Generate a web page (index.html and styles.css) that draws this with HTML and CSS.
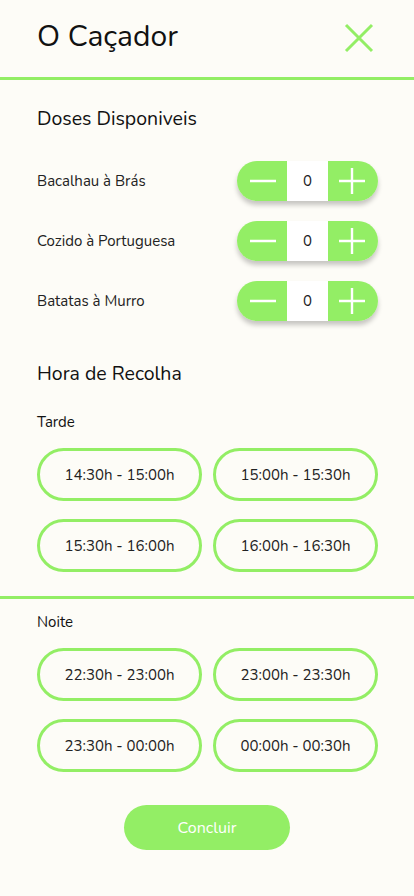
FILE: index.html
```html
<!DOCTYPE html>
<html lang="pt">
<head>
<meta charset="utf-8">
<link rel="stylesheet" href="styles.css">
</head>
<body>
<header class="header">
  <h1 class="title">O Caçador</h1>
  <svg class="close" width="30" height="30" viewBox="0 0 30 30"><path d="M2 2 L28 28 M28 2 L2 28" stroke="#93ee65" stroke-width="3" fill="none"/></svg>
</header>
<div class="rule"></div>
<section class="doses">
  <h2 class="heading">Doses Disponiveis</h2>
  <div class="dose-row">
    <span class="dose-name">Bacalhau à Brás</span>
    <div class="stepper">
      <button class="step step-minus"><svg width="28" height="28" viewBox="0 0 28 28"><path d="M1 14 H27" stroke="#fff" stroke-width="2.4"/></svg></button>
      <span class="count">0</span>
      <button class="step step-plus"><svg width="28" height="28" viewBox="0 0 28 28"><path d="M1 14 H27 M14 1 V27" stroke="#fff" stroke-width="2.4"/></svg></button>
    </div>
  </div>
  <div class="dose-row">
    <span class="dose-name">Cozido à Portuguesa</span>
    <div class="stepper">
      <button class="step step-minus"><svg width="28" height="28" viewBox="0 0 28 28"><path d="M1 14 H27" stroke="#fff" stroke-width="2.4"/></svg></button>
      <span class="count">0</span>
      <button class="step step-plus"><svg width="28" height="28" viewBox="0 0 28 28"><path d="M1 14 H27 M14 1 V27" stroke="#fff" stroke-width="2.4"/></svg></button>
    </div>
  </div>
  <div class="dose-row">
    <span class="dose-name">Batatas à Murro</span>
    <div class="stepper">
      <button class="step step-minus"><svg width="28" height="28" viewBox="0 0 28 28"><path d="M1 14 H27" stroke="#fff" stroke-width="2.4"/></svg></button>
      <span class="count">0</span>
      <button class="step step-plus"><svg width="28" height="28" viewBox="0 0 28 28"><path d="M1 14 H27 M14 1 V27" stroke="#fff" stroke-width="2.4"/></svg></button>
    </div>
  </div>
</section>
<section class="hours">
  <h2 class="heading heading-hours">Hora de Recolha</h2>
  <h3 class="period">Tarde</h3>
  <div class="slots">
    <button class="slot">14:30h - 15:00h</button>
    <button class="slot">15:00h - 15:30h</button>
    <button class="slot">15:30h - 16:00h</button>
    <button class="slot">16:00h - 16:30h</button>
  </div>
</section>
<div class="rule rule-mid"></div>
<section class="hours">
  <h3 class="period period-night">Noite</h3>
  <div class="slots">
    <button class="slot">22:30h - 23:00h</button>
    <button class="slot">23:00h - 23:30h</button>
    <button class="slot">23:30h - 00:00h</button>
    <button class="slot">00:00h - 00:30h</button>
  </div>
</section>
<div class="actions">
  <button class="submit">Concluir</button>
</div>
</body>
</html>
```
FILE: styles.css
```css
* { box-sizing: border-box; }
body {
  margin: 0;
  background: #fdfcf7;
  font-family: "Nunito", "Lato", "Noto Sans", sans-serif;
  color: #111;
}
button { font-family: inherit; }
.header {
  height: 77px;
  display: flex;
  align-items: center;
  justify-content: space-between;
  padding: 0 40px 0 37px;
}
.title {
  margin: 0 0 4px;
  font-size: 30px;
  font-weight: 400;
  line-height: 1;
}
.close { display: block; margin-top: -2px; }
.rule {
  height: 3px;
  background: #93ee65;
}
.doses {
  padding: 0 36px 0 37px;
}
.heading {
  margin: 0;
  font-size: 19.5px;
  font-weight: 400;
  height: 56px;
  padding-top: 27px;
  line-height: 24px;
}
.dose-row {
  display: flex;
  align-items: center;
  justify-content: space-between;
  height: 40px;
  margin-top: 20px;
}
.dose-row:first-of-type { margin-top: 25px; }
.dose-name {
  font-size: 15px;
  color: #222;
}
.stepper {
  display: flex;
  height: 40px;
  width: 141px;
  border-radius: 20px;
  overflow: hidden;
  box-shadow: 0 4px 5px rgba(0, 0, 0, 0.22);
}
.step {
  width: 50px;
  border: 0;
  padding: 0;
  background: #93ee65;
  display: flex;
  align-items: center;
  justify-content: center;
}
.step svg { display: block; }
.step-minus { padding-left: 2px; }
.step-plus { padding-right: 2px; }
.count {
  flex: 1;
  background: #fff;
  display: flex;
  align-items: center;
  justify-content: center;
  font-size: 15px;
  color: #222;
}
.hours {
  padding: 0 36px 0 37px;
}
.heading-hours {
  height: auto;
  padding-top: 41px;
}
.period {
  margin: 0;
  font-size: 15px;
  font-weight: 400;
  line-height: 20px;
  margin-top: 26px;
}
.period-night {
  margin-top: 13px;
}
.slots {
  display: grid;
  grid-template-columns: 1fr 1fr;
  column-gap: 11px;
  row-gap: 18px;
  margin-top: 16px;
}
.slot {
  height: 53px;
  border: 3px solid #93ee65;
  border-radius: 27px;
  background: transparent;
  font-size: 15px;
  color: #222;
  padding: 0;
}
.rule-mid { margin-top: 24px; }
.actions {
  display: flex;
  justify-content: center;
  margin-top: 33px;
}
.submit {
  width: 166px;
  height: 45px;
  border: 0;
  border-radius: 23px;
  background: #93ee65;
  color: #fff;
  font-size: 16px;
}
```
